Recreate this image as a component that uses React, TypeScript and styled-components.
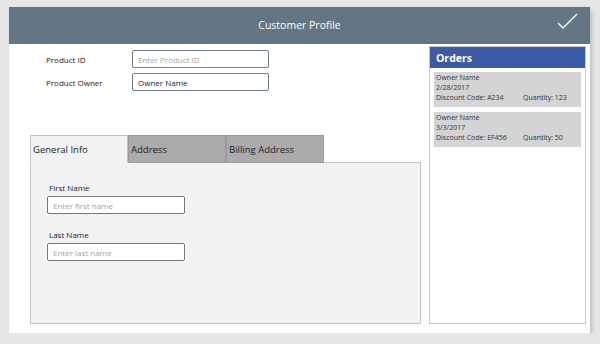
import React, { FC } from "react";
import styled, { createGlobalStyle } from "styled-components";

const GlobalStyle = createGlobalStyle`
  html, body {
    margin: 0;
    padding: 0;
    background: #e6e6e6;
    font-family: "Open Sans", "DejaVu Sans", sans-serif;
  }
  * { box-sizing: border-box; }
`;

// outer card
const Screen = styled.div`
  width: 581px;
  height: 326px;
  margin: 7px 0 0 9px;
  background: #ffffff;
  box-shadow: 2px 3px 4px rgba(0, 0, 0, 0.18);
  display: flex;
  flex-direction: column;
`;

const Header = styled.div`
  position: relative;
  height: 37px;
  background: #647684;
  color: #ffffff;
  display: flex;
  align-items: center;
  justify-content: center;
  font-size: 10.5px;
  padding-bottom: 1px;
`;

const CheckButton = styled.svg`
  position: absolute;
  right: 12px;
  top: 6px;
`;

const Body = styled.div`
  flex: 1;
  display: flex;
  gap: 8px;
  padding: 2px 4px 9px 21px;
`;

const LeftColumn = styled.div`
  width: 391px;
  display: flex;
  flex-direction: column;
`;

// product form
const Form = styled.div`
  display: flex;
  flex-direction: column;
  gap: 5px;
  padding: 4px 0 0 16px;
`;

const FormRow = styled.div`
  display: flex;
  align-items: center;
`;

const RowLabel = styled.label`
  width: 86px;
  font-size: 8px;
  color: #222;
`;

type InputProps = { width?: string };

const TextBox = styled.input<InputProps>`
  display: block;
  width: ${(p) => p.width || "137px"};
  height: 18px;
  border: 1px solid #6e7c88;
  border-radius: 2px;
  padding: 0 5px;
  font-family: inherit;
  font-size: 8px;
  color: #222;
  background: #ffffff;
  outline: none;
  &::placeholder {
    color: #a4a4a4;
  }
`;

// tabs
const TabStrip = styled.div`
  display: flex;
  margin-top: 44px;
  margin-bottom: -1px;
  position: relative;
  z-index: 1;
`;

type TabProps = { active?: boolean };

const Tab = styled.div<TabProps>`
  width: 98px;
  height: 28px;
  display: flex;
  align-items: center;
  padding-left: 2px;
  font-size: 9.5px;
  color: #222;
  background: ${(p) => (p.active ? "#f2f2f2" : "#ababab")};
  border: 1px solid ${(p) => (p.active ? "#c4c4c4" : "#9a9a9a")};
  border-bottom-color: ${(p) => (p.active ? "#f2f2f2" : "#9a9a9a")};
`;

const TabPanel = styled.div`
  flex: 1;
  background: #f2f2f2;
  border: 1px solid #c4c4c4;
  padding: 19px 0 0 16px;
  display: flex;
  flex-direction: column;
`;

const FieldLabel = styled.label`
  display: block;
  font-size: 8px;
  line-height: 11px;
  color: #222;
  margin: 0 0 3px 2px;
`;

const Field = styled.div`
  margin-bottom: 15px;
`;

// orders side panel
const OrdersPanel = styled.div`
  width: 157px;
  border: 1px solid #c8c8c8;
  background: #ffffff;
  display: flex;
  flex-direction: column;
`;

const OrdersTitle = styled.div`
  height: 21px;
  background: #3b5ba6;
  color: #ffffff;
  font-weight: 700;
  font-size: 10.5px;
  display: flex;
  align-items: center;
  padding-left: 6px;
`;

const OrderList = styled.div`
  display: flex;
  flex-direction: column;
  gap: 5px;
  padding: 4px 4px 0 4px;
`;

const OrderCard = styled.div`
  background: #d4d4d4;
  padding: 1px 3px 4px 2px;
  font-size: 7px;
  line-height: 10px;
  color: #333;
`;

const OrderMeta = styled.div`
  display: flex;
`;

const Discount = styled.span`
  width: 87px;
`;

type Order = { owner: string; date: string; code: string; qty: number };

const orders: Order[] = [
  { owner: "Owner Name", date: "2/28/2017", code: "A234", qty: 123 },
  { owner: "Owner Name", date: "3/3/2017", code: "EF456", qty: 50 },
];

const OrderItem: FC<{ order: Order }> = ({ order }) => (
  <OrderCard>
    <div>{order.owner}</div>
    <div>{order.date}</div>
    <OrderMeta>
      <Discount>Discount Code: {order.code}</Discount>
      <span>Quantity: {order.qty}</span>
    </OrderMeta>
  </OrderCard>
);

const App: FC = () => {
  return (
    <>
      <GlobalStyle />
      <Screen>
        <Header>
          Customer Profile
          <CheckButton width="22" height="18" viewBox="0 0 22 18">
            <polyline
              points="2,10 7,15 21,1"
              fill="none"
              stroke="#ffffff"
              strokeWidth="1.4"
            />
          </CheckButton>
        </Header>
        <Body>
          <LeftColumn>
            <Form>
              <FormRow>
                <RowLabel>Product ID</RowLabel>
                <TextBox placeholder="Enter Product ID" />
              </FormRow>
              <FormRow>
                <RowLabel>Product Owner</RowLabel>
                <TextBox defaultValue="Owner Name" />
              </FormRow>
            </Form>
            <TabStrip>
              <Tab active>General Info</Tab>
              <Tab>Address</Tab>
              <Tab>Billing Address</Tab>
            </TabStrip>
            <TabPanel>
              <Field>
                <FieldLabel>First Name</FieldLabel>
                <TextBox width="138px" placeholder="Enter first name" />
              </Field>
              <Field>
                <FieldLabel>Last Name</FieldLabel>
                <TextBox width="138px" placeholder="Enter last name" />
              </Field>
            </TabPanel>
          </LeftColumn>
          <OrdersPanel>
            <OrdersTitle>Orders</OrdersTitle>
            <OrderList>
              {orders.map((o) => (
                <OrderItem key={o.date} order={o} />
              ))}
            </OrderList>
          </OrdersPanel>
        </Body>
      </Screen>
    </>
  );
};

export default App;
